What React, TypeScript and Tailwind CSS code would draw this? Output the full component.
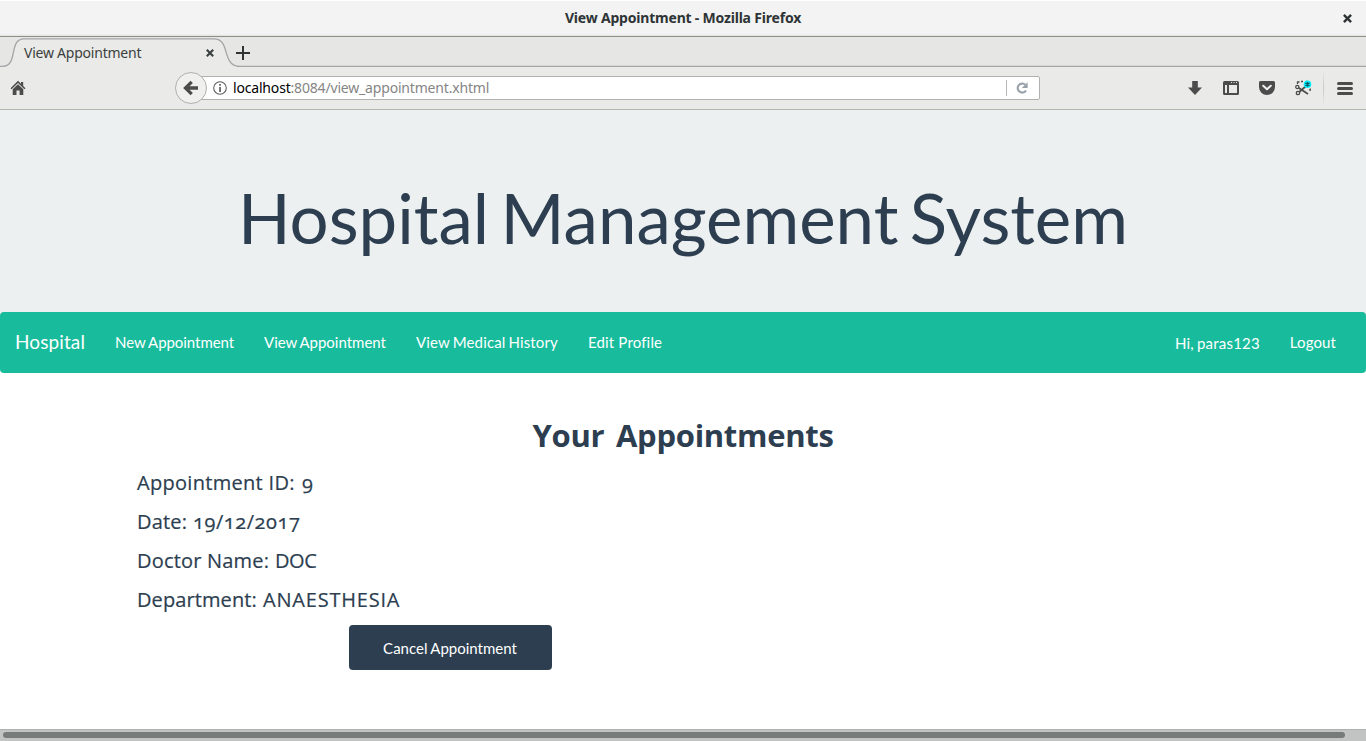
import { ReactNode } from "react";

const NAV_LINKS = [
  { label: "New Appointment", style: "w-[149px] tracking-[-0.05px] [word-spacing:-0.600px]" },
  { label: "View Appointment", style: "w-[152px] [word-spacing:-1px]" },
  { label: "View Medical History", style: "w-[172px] tracking-[0.15px] [word-spacing:-1px]" },
  { label: "Edit Profile", style: "w-[80px] tracking-[0.16px]" },
];

function Close({ className }: { className: string }) {
  return (
    <svg viewBox="0 0 8 8" className={className}>
      <path d="M.8.8 7.2 7.2M7.200.8.8 7.200" stroke="currentColor" strokeWidth="2.100" fill="none" />
    </svg>
  );
}

function TitleBar() {
  return (
    <div className="flex h-[37px] shrink-0 items-center border-b border-[#8f8f88] border-t border-t-white bg-[linear-gradient(#f3f3f3_0,#f3f3f3_33px,#dfdfdc_35px)] pb-px text-[#2e3436]">
      <div className="w-10" />
      <div className="flex-1 text-center font-['Noto_Sans',sans-serif] text-[14px] font-bold leading-5 tracking-[-0.2px]">
        View Appointment - Mozilla Firefox
      </div>
      <div className="flex w-10 pl-[17px]">
        <Close className="h-[9px] w-[9px]" />
      </div>
    </div>
  );
}

function TabBar() {
  return (
    <div className="relative h-[30px] shrink-0 bg-[#e6e6e4]">
      <svg className="absolute left-0 top-px h-[29px] w-[1366px]" viewBox="0 0 1366 29">
        <path d="M0 29V28.500H2C19 28.500 8 .9 24 .9H214C231 .9 221 28.500 240 28.500H1366V29Z" fill="#eaeae8" />
        <path d="M0 28.500H2C19 28.500 8 .9 24 .9H214C231 .9 221 28.500 240 28.500H1366" fill="none" stroke="#a3a5a7" strokeWidth="1.300" />
      </svg>
      <div className="relative flex h-full items-center pl-6 pt-px text-[#3a3f40]">
        <span className="w-[182px] whitespace-nowrap font-['Noto_Sans',sans-serif] text-[14px] leading-5 tracking-[-0.23px]">
          View Appointment
        </span>
        <Close className="h-2 w-2" />
        <svg className="ml-[22px] h-[14px] w-[14px]" viewBox="0 0 14 14">
          <path d="M7 0v14M0 7h14" stroke="#303436" strokeWidth="2" />
        </svg>
      </div>
    </div>
  );
}

function Icon({ children }: { children: ReactNode }) {
  return (
    <svg viewBox="0 0 16 16" className="h-4 w-4 shrink-0 overflow-visible" fill="#4c4c4c">
      {children}
    </svg>
  );
}

function ToolBar() {
  return (
    <div className="flex h-[43px] shrink-0 items-center border-b border-[#b4b5ac] bg-[#eaeae8] pl-[10px]">
      <Icon>
        <path d="M8 .8 .5 8.200 1.600 9.300 8 3l6.400 6.300L15.500 8.200 13.200 5.900V2H11v1.700Z" />
        <path d="M2.700 9.300 8 4.200 13.300 9.300V15H9.600v-4.500H6.500V15H2.700Z" />
      </Icon>
      <div className="z-10 ml-[149px] flex h-8 w-8 shrink-0 items-center justify-center rounded-full border border-[#b0b0ae] bg-[#f0f0ef]">
        <svg viewBox="0 0 16 16" className="h-4 w-4">
          <path d="M15 8H3M8.700 1.800 2.500 8l6.200 6.200" fill="none" stroke="#4c4c4c" strokeWidth="3.300" />
        </svg>
      </div>
      <div className="-ml-2 flex h-6 w-[841px] items-center rounded-r-[2px] border border-[#b1b1af] bg-white pl-[13px]">
        <svg viewBox="0 0 14 14" className="h-[14px] w-[14px]">
          <circle cx="7" cy="7" r="6.300" fill="none" stroke="#5c5c5c" strokeWidth="1.100" />
          <path d="M6.200 3h1.700v1.700H6.200ZM6.200 6h1.700v5H6.200Z" fill="#5c5c5c" />
        </svg>
        <span className="ml-[6px] flex-1 whitespace-nowrap font-['Noto_Sans',sans-serif] text-[14px] leading-5 tracking-[-0.18px] text-[#858585]">
          <span className="text-black">localhost</span>:8084/view_appointment.xhtml
        </span>
        <div className="h-4 w-px bg-[#b4b7ba]" />
        <svg viewBox="0 0 12 12" className="ml-[9px] mr-[11px] h-3 w-3">
          <path d="M9.300 2.800A4.500 4.500 0 1 0 10 8.500" fill="none" stroke="#98a1aa" strokeWidth="2.100" />
          <path d="M11.600.2V6H5.800Z" fill="#98a1aa" />
        </svg>
      </div>
      <div className="ml-[147px] flex gap-5">
        <Icon>
          <path d="M5.200 1h5.600v6.400H15L8 15 1 7.400h4.200Z" />
        </Icon>
        <Icon>
          <path
            fillRule="evenodd"
            d="M1.500 1h13A1.500 1.500 0 0 1 16 2.500v11a1.500 1.500 0 0 1-1.500 1.500h-13A1.500 1.500 0 0 1 0 13.500v-11A1.500 1.500 0 0 1 1.500 1ZM2 5v8h2V5Zm4 0v8h8V5ZM8 2v1h1V2Zm2.500 0v1h1V2ZM13 2v1h1V2Z"
          />
        </Icon>
        <Icon>
          <path d="M1.500 1h13A1.500 1.500 0 0 1 16 2.500V7a8 8 0 0 1-16 0V2.500A1.500 1.500 0 0 1 1.500 1Z" />
          <path d="M4.200 5.700 8 9.300l3.800-3.600" fill="none" stroke="#f0f0f0" strokeWidth="2" strokeLinecap="round" strokeLinejoin="round" />
        </Icon>
        <Icon>
          <path d="M2.500 4V2h2M6 1.500h2M15 9v2M15.300 8.500v2M11 1.500h1" fill="none" stroke="#4c4c4c" strokeWidth="1.300" />
          <circle cx="2.300" cy="7" r="1.600" fill="none" stroke="#4c4c4c" strokeWidth="1.300" />
          <circle cx="3" cy="13" r="1.700" fill="none" stroke="#4c4c4c" strokeWidth="1.300" />
          <path d="m3.500 7.800 9.500 6.200M4.200 12 10.500 6.500" stroke="#4c4c4c" strokeWidth="1.700" />
          <circle cx="12.500" cy="4.300" r="3.800" fill="#00f0ff" />
          <path d="M12.500 1.900v4.800M10.400 3.100l4.200 2.400M14.600 3.100l-4.200 2.400" stroke="#075a66" strokeWidth="1.400" />
        </Icon>
      </div>
      <div className="ml-3 h-9 w-px bg-[linear-gradient(transparent,#c8c8c6,transparent)]" />
      <div className="ml-[13px] flex w-4 flex-col gap-[2px]">
        <div className="h-[3px] rounded-full bg-[#4c4c4c]" />
        <div className="h-[3px] rounded-full bg-[#4c4c4c]" />
        <div className="h-[3px] rounded-full bg-[#4c4c4c]" />
      </div>
    </div>
  );
}

const DETAILS = [
  { label: "Appointment ID:", value: "9", labelStyle: "w-[165px] tracking-[0.3px]", valueStyle: "" },
  { label: "Date:", value: "19/12/2017", labelStyle: "w-[56px] tracking-[0.2px]", valueStyle: "tracking-[0.55px]" },
  { label: "Doctor Name:", value: "DOC", labelStyle: "w-[138px] tracking-[0.2px]", valueStyle: "tracking-[-0.4px]" },
  { label: "Department:", value: "ANAESTHESIA", labelStyle: "w-[126px] tracking-[0.1px]", valueStyle: "tracking-[0.8px]" },
];

export default function App() {
  return (
    <div className="flex h-[741px] w-[1366px] flex-col overflow-hidden bg-white font-[Lato,sans-serif] text-[15px] text-[#2c3e50]">
      <TitleBar />
      <TabBar />
      <ToolBar />
      <header className="flex h-[202px] shrink-0 items-center justify-center bg-[#ecf0f1] pt-3">
        <h1 className="whitespace-nowrap text-[69px] leading-none [word-spacing:-6.200px]">Hospital Management System</h1>
      </header>
      <div className="shrink-0 bg-[linear-gradient(#ecf0f1_50%,white_50%)]">
        <nav className="flex h-[61px] items-center rounded bg-[#18bc9c] px-[15px] text-white">
          <a className="w-[100px] text-[19px] tracking-[0.1px]">Hospital</a>
          {NAV_LINKS.map(({ label, style }) => (
            <a key={label} className={`${style} whitespace-nowrap`}>
              {label}
            </a>
          ))}
          <span className="ml-auto pt-[2px] tracking-[0.2px] [word-spacing:-1px]">Hi, paras123</span>
          <a className="ml-[30px] mr-[15px] tracking-[0.1px]">Logout</a>
        </nav>
      </div>
      <main className="flex-1">
        <h2 className="pt-[41px] text-center font-['Open_Sans',sans-serif] text-[31px] font-bold leading-[42px] tracking-[-0.3px] [word-spacing:4px]">
          Your Appointments
        </h2>
        <div className="pl-[137px] pt-[12px] font-['Open_Sans',sans-serif] text-[20px] leading-[30px] [-webkit-text-stroke:0.2px_#2c3e50] [font-variant-numeric:oldstyle-nums]">
          {DETAILS.map(({ label, value, labelStyle, valueStyle }) => (
            <p key={label} className="flex h-[39px] whitespace-nowrap">
              <span className={labelStyle}>{label}</span>
              <span className={valueStyle}>{value}</span>
            </p>
          ))}
        </div>
        <button className="ml-[349px] mt-px block h-[45px] w-[203px] rounded bg-[#2c3e50] pr-px pt-[2px] text-white [word-spacing:-0.500px]">
          Cancel Appointment
        </button>
      </main>
      <div className="h-3 shrink-0 border-t border-[#aeb2af] bg-[#c2c4c3] pl-[3px] pt-[2px]">
        <div className="h-[6px] w-[1342px] rounded-full bg-[#777b7a]" />
      </div>
    </div>
  );
}
